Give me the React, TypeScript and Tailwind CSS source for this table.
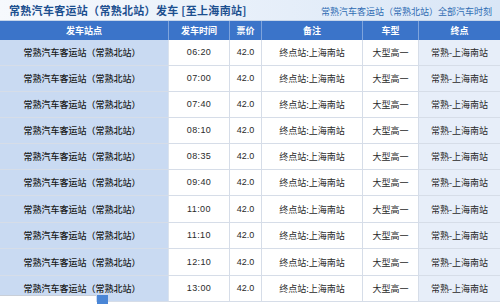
import React from "react";

const times = ["06:20", "07:00", "07:40", "08:10", "08:35", "09:40", "11:00", "11:10", "12:10", "13:00"];
const tall = [false, false, false, false, false, false, true, false, true, false];

const cjk = { fontFamily: '"Noto Sans CJK SC", "Noto Sans", sans-serif' };
const num = { fontFamily: '"Liberation Sans", "Noto Sans CJK SC", sans-serif' };

export default function App() {
  return (
    <div className="relative w-[500px] h-[304px] overflow-hidden bg-white" style={cjk}>
      {/* title bar */}
      <div className="h-[21px] flex items-center justify-between pl-[9px] pr-[8px] bg-gradient-to-r from-[#f6f9fd] to-[#d9e6f6] border-b border-[#c5d5ea]">
        <span className="text-[11px] font-bold text-[#1c4f8f] leading-none tracking-[0.3px] whitespace-pre">
          常熟汽车客运站（常熟北站）发车 [至上海南站]
        </span>
        <span className="text-[9px] text-[#2f6cb3] leading-none mt-[2px]">常熟汽车客运站（常熟北站）全部汽车时刻</span>
      </div>

      {/* header */}
      <div className="grid grid-cols-[169px_61px_32px_101px_56px_81px] h-[19px] bg-[#3b74c9] text-white text-[9px] font-bold leading-none">
        {["发车站点", "发车时间", "票价", "备注", "车型", "终点"].map((h, i) => (
          <div
            key={h}
            className={`flex items-center justify-center ${i < 5 ? "border-r border-[#7fa4dc]" : ""}`}
          >
            {h}
          </div>
        ))}
      </div>

      {/* rows */}
      {times.map((t, idx) => (
        <div
          key={t}
          className={`grid grid-cols-[169px_61px_32px_101px_56px_81px] ${tall[idx] ? "h-[27px]" : "h-[26px]"} border-b border-[#d6dde8] text-[9px] leading-none text-[#2a2a2a]`}
        >
          <div className="flex items-center justify-center bg-[#c9daf2] border-r border-[#dbe3ee] text-[#1a1a1a] font-medium pr-[4px]">
            常熟汽车客运站（常熟北站）
          </div>
          <div className="flex items-center justify-center border-r border-[#d6dde8] tracking-[0.4px]" style={num}>
            {t}
          </div>
          <div className="flex items-center justify-center border-r border-[#d6dde8]" style={num}>
            42.0
          </div>
          <div className="flex items-center justify-center border-r border-[#d6dde8]">终点站:上海南站</div>
          <div className="flex items-center justify-center border-r border-[#d6dde8]">大型高一</div>
          <div className="flex items-center justify-center bg-[#e7eef9]">常熟-上海南站</div>
        </div>
      ))}

      {/* overlay at bottom */}
      <div className="absolute left-0 top-[295px] w-[96px] h-[9px] bg-white border-t border-[#c9cfd8]" />
      <div className="absolute left-[97px] top-[295px] w-[11px] h-[9px] bg-[#4a86d6]" />
    </div>
  );
}
